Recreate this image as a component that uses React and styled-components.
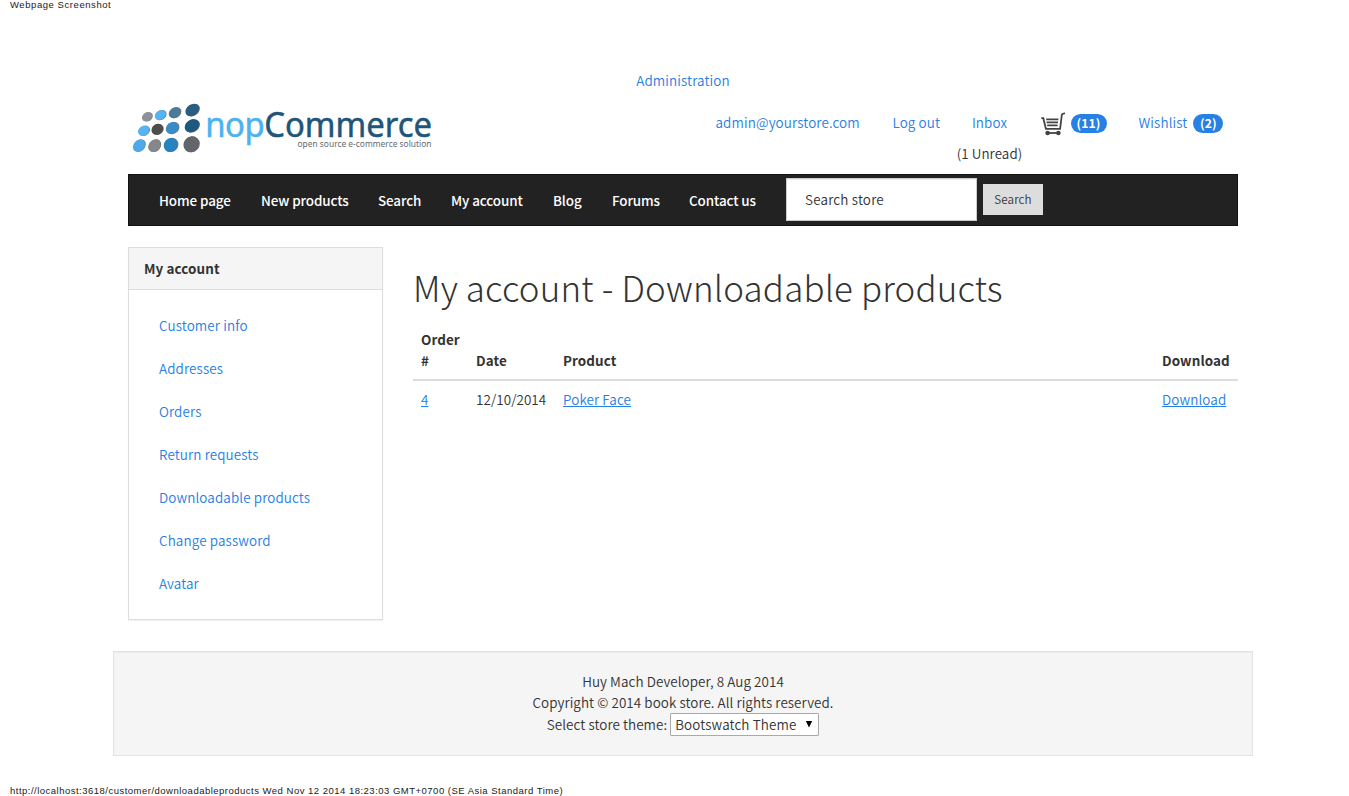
import React from "react";
import styled, { createGlobalStyle } from "styled-components";

const GlobalStyle = createGlobalStyle`
  * { box-sizing: border-box; }
  body {
    margin: 0;
    background: #fff;
    color: #333;
    font-family: "Noto Sans CJK JP", "Noto Sans CJK SC", sans-serif;
    font-size: 13.43px;
    font-weight: 350;
    letter-spacing: 0.08px;
    line-height: 21.43px;
    overflow: hidden;
  }
`;

const Page = styled.div`
  height: 796px;
  display: flex;
  flex-direction: column;
`;

const PrintLine = styled.div`
  height: ${(p) => p.$height}px;
  padding-left: 10px;
  font-family: "Liberation Sans", Arial, sans-serif;
  font-size: 9.5px;
  font-weight: 400;
  line-height: 10px;
  letter-spacing: ${(p) => p.$spacing}px;
  color: #222;
  white-space: nowrap;
`;

const Container = styled.div`
  width: 1140px;
  margin-left: 113px;
  padding: 0 15px;
`;

const Link = styled.a`
  color: #2780e3;
  letter-spacing: 0.13px;
  text-decoration: ${(p) => (p.$underlined ? "underline" : "none")};
  white-space: nowrap;
`;

const AdminBar = styled.div`
  margin-top: 60px;
  height: 21px;
  text-align: center;
`;

const Header = styled.header`
  display: flex;
  justify-content: space-between;
  height: 83px;
`;

const LogoSvg = styled.svg`
  display: block;
  margin-top: 4px;
  overflow: visible;
`;

const UserLinks = styled.div`
  display: flex;
  padding-top: 17px;
  padding-right: 14px;
  line-height: 31px;
`;

const UserLink = styled.div`
  display: flex;
  align-items: center;
  height: 31px;
  width: ${(p) => p.$width}px;

  & > a {
    margin-top: -2px;
  }
`;

const InboxItem = styled.div`
  width: 66px;
  margin: -1px 18px 0 0;
  text-align: center;
  white-space: nowrap;
`;

const Badge = styled.span`
  margin-left: 6px;
  height: 19px;
  width: ${(p) => p.$width}px;
  border-radius: 10px;
  background: #2780e3;
  color: #fff;
  font-weight: 700;
  font-size: 12.2px;
  line-height: 18px;
  text-align: center;
`;

const Navbar = styled.nav`
  display: flex;
  height: 52px;
  border: 1px solid #121212;
  background: #222;
  padding-left: 15px;
`;

const NavItem = styled.a`
  padding: 15px 0 0 15px;
  width: ${(p) => p.$width}px;
  color: #fff;
  font-weight: 500;
  letter-spacing: -0.1px;
  white-space: nowrap;
`;

const SearchField = styled.div`
  width: 191px;
  height: 43px;
  margin-top: 3px;
  padding: 10px 18px;
  border: 1px solid #ccc;
  background: #fff;
  letter-spacing: 0.2px;
  box-shadow: inset 0 1px 1px rgba(0, 0, 0, 0.075);
`;

const SearchButton = styled.button`
  width: 60px;
  height: 31px;
  margin: 9px 0 0 6px;
  padding: 0;
  border: 0;
  background: #ddd;
  color: #333;
  font: inherit;
  font-size: 11.6px;
  letter-spacing: 0.15px;
`;

const Columns = styled.div`
  display: flex;
  gap: 30px;
  margin-top: 21px;
`;

const Panel = styled.aside`
  width: 255px;
  height: 373px;
  border: 1px solid #ddd;
  box-shadow: 0 1px 1px rgba(0, 0, 0, 0.05);
`;

const PanelHeading = styled.div`
  height: 42px;
  padding: 10px 15px;
  border-bottom: 1px solid #ddd;
  background: #f5f5f5;
  font-weight: 700;
  letter-spacing: 0.1px;
`;

const Menu = styled.div`
  padding: 15px 30px;
`;

const MenuItem = styled.div`
  height: 43px;
  padding-top: 10px;
`;

const Main = styled.main`
  width: 825px;
`;

const Title = styled.h1`
  margin: 19px 0;
  font-size: 34.9px;
  line-height: 43px;
  font-weight: 300;
  letter-spacing: 0.19px;
  white-space: nowrap;
`;

const Table = styled.table`
  width: 825px;
  border-collapse: collapse;
  table-layout: fixed;
`;

const Th = styled.th`
  width: ${(p) => p.$width}px;
  height: 52px;
  padding: 0 8px 8px;
  border-bottom: 2px solid #ddd;
  text-align: left;
  vertical-align: bottom;
  line-height: 21px;
`;

const Td = styled.td`
  padding: 8px;
  white-space: nowrap;
`;

const Footer = styled.footer`
  width: 1140px;
  height: 105px;
  margin: 31px 0 30px 113px;
  padding-top: 19px;
  border: 1px solid #e3e3e3;
  background: #f5f5f5;
  box-shadow: inset 0 1px 1px rgba(0, 0, 0, 0.05);
  text-align: center;
`;

const ThemeRow = styled.div`
  display: flex;
  justify-content: center;
  align-items: center;
  gap: 3px;
  height: 23px;
  margin-top: -1px;
`;

const SelectBox = styled.div`
  display: flex;
  justify-content: space-between;
  width: 149px;
  height: 23px;
  padding: 0 5px 0 4px;
  border: 1px solid #a9a9a9;
  background: #fff;
  line-height: 21px;
  letter-spacing: 0.13px;
  border-radius: 1px;
`;

const Arrow = styled.svg`
  margin-top: 7px;
`;

const dots = [
  [27, 21.7, 5.4, 4.3, "#8b9299"],
  [40.3, 20, 6, 4.6, "#56b4f3"],
  [54.7, 17.7, 6.4, 5, "#4c7a98"],
  [72.3, 15, 7.5, 5.6, "#2b5d80"],
  [23.7, 35.7, 6, 4.8, "#56b4f3"],
  [37.3, 34.3, 6.1, 5.2, "#4d4d4d"],
  [52.3, 33, 6.9, 5.6, "#3a8cc6"],
  [72, 30.8, 7.8, 6.1, "#1c587f"],
  [19, 50.7, 6.9, 5.4, "#4fa9e8"],
  [34.3, 50.7, 6.9, 5.6, "#858789"],
  [50.7, 50, 7.4, 6.7, "#2782c0"],
  [71.3, 49.3, 8.2, 7.6, "#626569"],
];

function Logo() {
  return (
    <LogoSvg width="310" height="64" viewBox="8 0 310 64">
      {dots.map(([x, y, rx, ry, fill]) => {
        const tilt = y > 45 ? -48 : -34;
        return (
          <g key={`${x}-${y}`}>
            <ellipse cx={x + 0.5} cy={y + 0.5} rx={rx} ry={ry} fill="#777" transform={`rotate(${tilt} ${x} ${y})`} />
            <ellipse cx={x} cy={y} rx={rx} ry={ry} fill={fill} transform={`rotate(${tilt} ${x} ${y})`} />
          </g>
        );
      })}
      <g fontFamily="'Noto Sans', sans-serif" fontWeight="400" letterSpacing="0">
        <text x="85.3" y="42.3" fontSize="34.5" fill="#1e5578" stroke="#1e5578" strokeWidth="0.5" textLength="226.7" lengthAdjust="spacingAndGlyphs">
          <tspan fill="#4ab2f1" stroke="#4ab2f1" letterSpacing="-0.5">nop</tspan>Commerce
        </text>
        <text x="177.5" y="52.3" fontSize="9.1" fill="#666b70" textLength="134" lengthAdjust="spacingAndGlyphs">open source e-commerce solution</text>
      </g>
    </LogoSvg>
  );
}

function CartIcon() {
  return (
    <svg width="24" height="24" viewBox="0 0 24 24" fill="none" stroke="#444" strokeWidth="1.8">
      <path d="M0.3 6.2h2l2.6 10.6h14.2L20.8 3.2q.3-1.8 3.2-1.8" />
      <path d="M5.2 7.4h12.2M5.6 10.4h11.4M6.2 13.4h10.4" strokeWidth="1.6" />
      <path d="M6.5 21h11" />
      <circle cx="6.6" cy="21" r="2.3" fill="#444" stroke="none" />
      <circle cx="17.4" cy="21" r="2.3" fill="#444" stroke="none" />
    </svg>
  );
}

const navItems = [
  ["Home page", 102],
  ["New products", 117],
  ["Search", 73],
  ["My account", 102],
  ["Blog", 59],
  ["Forums", 77],
  ["Contact us", 112],
];

const menuItems = [
  "Customer info",
  "Addresses",
  "Orders",
  "Return requests",
  "Downloadable products",
  "Change password",
  "Avatar",
];

export default function App() {
  return (
    <Page>
      <GlobalStyle />
      <PrintLine $height={10} $spacing={0.56}>Webpage Screenshot</PrintLine>
      <Container>
        <AdminBar><Link>Administration</Link></AdminBar>
        <Header>
          <Logo />
          <UserLinks>
            <UserLink $width={177}><Link>admin@yourstore.com</Link></UserLink>
            <UserLink $width={64}><Link>Log out</Link></UserLink>
            <InboxItem>
              <Link>Inbox</Link>
              <div>(1 Unread)</div>
            </InboxItem>
            <UserLink $width={98}><CartIcon /><Badge $width={36}>(11)</Badge></UserLink>
            <UserLink $width={85.5}><Link>Wishlist</Link><Badge $width={30}>(2)</Badge></UserLink>
          </UserLinks>
        </Header>
        <Navbar>
          {navItems.map(([label, width]) => (
            <NavItem key={label} $width={width}>{label}</NavItem>
          ))}
          <SearchField>Search store</SearchField>
          <SearchButton>Search</SearchButton>
        </Navbar>
        <Columns>
          <Panel>
            <PanelHeading>My account</PanelHeading>
            <Menu>
              {menuItems.map((label) => (
                <MenuItem key={label}><Link>{label}</Link></MenuItem>
              ))}
            </Menu>
          </Panel>
          <Main>
            <Title>My account - Downloadable products</Title>
            <Table>
              <thead>
                <tr>
                  <Th $width={55}>Order #</Th>
                  <Th $width={87}>Date</Th>
                  <Th $width={599}>Product</Th>
                  <Th $width={84}>Download</Th>
                </tr>
              </thead>
              <tbody>
                <tr>
                  <Td><Link $underlined>4</Link></Td>
                  <Td>12/10/2014</Td>
                  <Td><Link $underlined>Poker Face</Link></Td>
                  <Td><Link $underlined>Download</Link></Td>
                </tr>
              </tbody>
            </Table>
          </Main>
        </Columns>
      </Container>
      <Footer>
        <div>Huy Mach Developer, 8 Aug 2014</div>
        <div>Copyright © 2014 book store. All rights reserved.</div>
        <ThemeRow>
          <span>Select store theme:</span>
          <SelectBox>
            <span>Bootswatch Theme</span>
            <Arrow width="8" height="7" viewBox="0 0 8 7"><path d="M0.8 0h6.4L4 6.5z" fill="#000" /></Arrow>
          </SelectBox>
        </ThemeRow>
      </Footer>
      <PrintLine $height={10} $spacing={0.49}>
        http://localhost:3618/customer/downloadableproducts Wed Nov 12 2014 18:23:03 GMT+0700 (SE Asia Standard Time)
      </PrintLine>
    </Page>
  );
}
